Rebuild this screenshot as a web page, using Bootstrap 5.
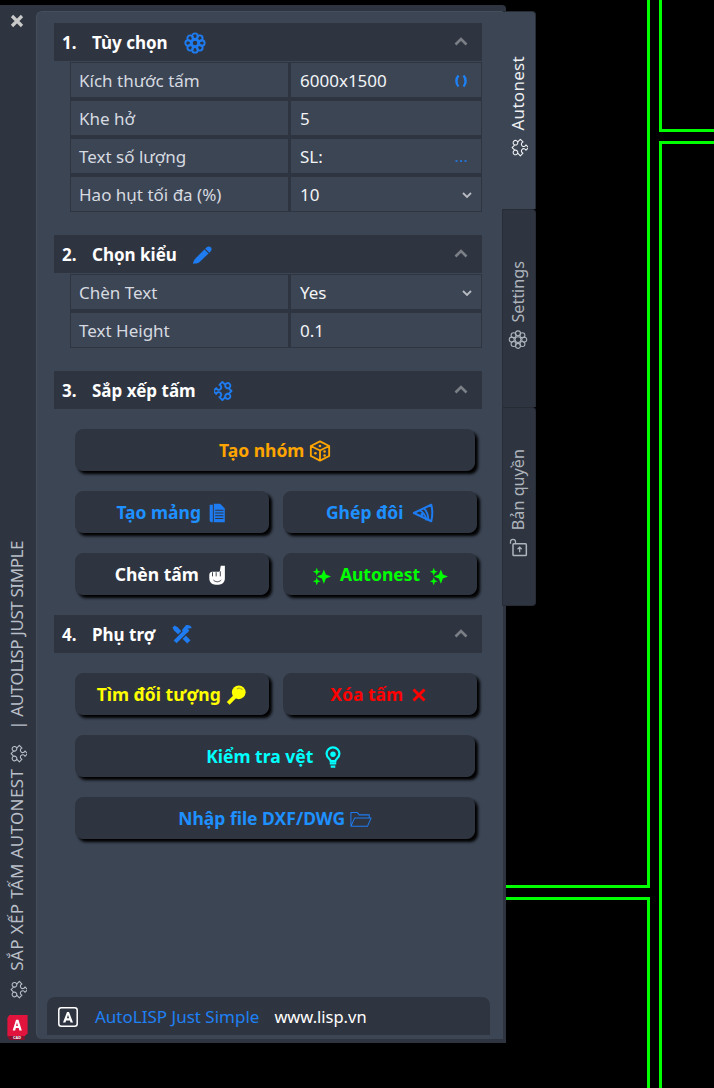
<!DOCTYPE html>
<html lang="vi">
<head>
  <meta charset="UTF-8">
  <title>Autonest</title>
  <link href="https://cdn.jsdelivr.net/npm/bootstrap@5.3.3/dist/css/bootstrap.min.css" rel="stylesheet">
  <style>
    body { background: #000; font-family: "Noto Sans", "Open Sans", sans-serif; }
    .cad-canvas { position: absolute; left: 0; top: 0; }
    .app-wrap { position: relative; padding-top: 5px; width: 536px; }
    .frame { width: 506px; height: 1038px; background: #2f3540; border-radius: 0 4px 0 0; }
    .side-bar { width: 36px; padding-top: 9px; }
    .close-x { width: 14px; height: 14px; margin-left: 10px; }
    .side-title { writing-mode: vertical-rl; transform: rotate(180deg); color: #b9bfc8; font-size: 17px; line-height: 20px; white-space: nowrap; margin-left: 7px; width: 20px; margin-bottom: 15px; }
    .side-title svg { width: 20px; height: 20px; }
    .title-one { letter-spacing: .35px; margin: 9px 0 5px; }
    .title-two { letter-spacing: -.4px; margin-top: 14px; }
    .cad-logo { width: 24px; height: 25px; margin-left: 5px; margin-bottom: 3px; }
    .panel-main { width: 467px; height: 1028px; margin-top: 6px; background: #3c4554; border-radius: 6px 0 0 6px; border-left: 1px solid #454e5d; border-top: 1px solid #454e5d; padding: 11px 0 4px 17px; }
    .sec-head { width: 428px; height: 38px; background: #2f3540; padding: 1px 14px 0 8px; color: #fff; font-weight: 700; font-size: 17px; }
    .sec-num { width: 30px; }
    .sec-icon { width: 22px; height: 22px; margin-left: 16px; }
    .icon-pull { margin-left: 15px; }
    .icon-push { margin-left: 18px; }
    .sec-caret { width: 14px; height: 9px; margin-left: auto; margin-top: -3px; }
    .prop-grid { display: grid; grid-template-columns: 217px 190px; gap: 4px 3px; width: 412px; margin-left: 16px; margin-top: 1px; padding: 1px 1px 1px 1px; background: #2f3540; }
    .prop-cell { height: 34px; background: #3c4554; padding: 2px 9px 0 8px; font-size: 17px; line-height: 32px; color: #d6dae0; }
    .prop-val { color: #f2f4f6; padding-left: 9px; }
    .sec-gap { margin-bottom: 23px; }
    .tool-btn { --bs-btn-bg: #2f3540; --bs-btn-border-color: #2f3540; --bs-btn-hover-bg: #2f3540; --bs-btn-hover-border-color: #2f3540; height: 42px; border-radius: 8px; padding: 1px 0 0; font-weight: 700; font-size: 17.5px; box-shadow: 3px 3px 3px #000; }
    .tool-btn svg { width: 22px; height: 22px; }
    .tool-btn svg.spark-size { width: 19px; height: 19px; }
    .btn-wide { width: 400px; }
    .btn-half { width: 194px; }
    .btn-area { padding-left: 21px; margin-top: 20px; margin-bottom: 20px; row-gap: 20px; }
    .btn-pair { gap: 14px; }
    .c-orange { --bs-btn-color: #ffa500; --bs-btn-hover-color: #ffa500; }
    .c-blue { --bs-btn-color: #1e90ff; --bs-btn-hover-color: #1e90ff; }
    .c-white { --bs-btn-color: #fff; --bs-btn-hover-color: #fff; }
    .c-lime { --bs-btn-color: #00ff00; --bs-btn-hover-color: #00ff00; }
    .c-yellow { --bs-btn-color: #ffff00; --bs-btn-hover-color: #ffff00; }
    .c-red { --bs-btn-color: #ff0000; --bs-btn-hover-color: #ff0000; }
    .c-cyan { --bs-btn-color: #00ffff; --bs-btn-hover-color: #00ffff; }
    .foot-bar { width: 443px; height: 38px; margin-left: -7px; margin-top: auto; background: #2f3540; border-radius: 8px 8px 0 0; padding: 2px 0 0 11px; font-size: 17px; color: #fff; }
    .foot-bar svg { width: 20px; height: 20px; margin-right: 17px; }
    .foot-name { color: #1e80f5; margin-right: 15px; }
    .foot-site { font-size: 16.5px; }
    .tab-col { width: 34px; margin-left: -4px; margin-top: 6px; height: 595px; position: relative; }
    .side-tab { height: 198px; background: #2f3540; border-right: 1px solid #262b34; border-left: 1px solid #282d37; border-top: 1px solid #262b34; border-radius: 0 4px 0 0; font-size: 16.2px; color: #aeb4bc; padding: 0 2px 6px 0; }
    .side-tab:last-child { border-radius: 0 4px 4px 0; height: 199px; border-bottom: 1px solid #262b34; }
    .side-tab.tab-on { background: #3c4554; color: #eef0f2; border-left-color: #3c4554; font-size: 17px; letter-spacing: .3px; padding-bottom: 8px; }
    .tab-label { writing-mode: vertical-rl; transform: rotate(180deg); line-height: 20px; gap: 7px; white-space: nowrap; }
    .tab-label svg { width: 20px; height: 20px; }
    .ic-bold { stroke-width: 2.1; }
    .ic-thin { stroke-width: 1.3; }
  </style>
</head>
<body>

  <!-- shared icon shapes -->
  <svg width="0" height="0" class="position-absolute">
    <symbol id="ic-puzzle" viewBox="0 0 24 24">
      <g fill="none" stroke="currentColor" stroke-linejoin="round" transform="translate(-2 0) rotate(45 14 12)">
        <path d="M5 7H9.500a2.800 2.800 0 1 1 5 0H19v4.500a2.800 2.800 0 1 1 0 5V21H14.500a2.800 2.800 0 1 0-5 0H5v-4.500a2.800 2.800 0 1 0 0-5z"/>
        <path d="M9.500 7a2.800 2.800 0 0 0 5 0M19 11.500a2.800 2.800 0 0 0 0 5"/>
      </g>
    </symbol>
    <symbol id="ic-flower" viewBox="0 0 24 24">
      <g fill="none" stroke="currentColor">
        <circle cx="12" cy="12" r="3.500"/>
        <circle cx="12" cy="4.500" r="3"/><circle cx="12" cy="19.500" r="3"/>
        <circle cx="4.500" cy="12" r="3"/><circle cx="19.500" cy="12" r="3"/>
        <circle cx="6.700" cy="6.700" r="3"/><circle cx="17.300" cy="6.700" r="3"/>
        <circle cx="6.700" cy="17.300" r="3"/><circle cx="17.300" cy="17.300" r="3"/>
      </g>
    </symbol>
    <symbol id="ic-spark" viewBox="0 0 24 24">
      <path d="M15 3l2.600 6.400L24 12l-6.400 2.600L15 21l-2.600-6.400L6 12l6.400-2.600zM6 1l1.400 3.600L11 6 7.400 7.400 6 11 4.600 7.400 1 6l3.600-1.400zM6 13l1.400 3.600L11 18l-3.600 1.400L6 23l-1.400-3.600L1 18l3.600-1.400z" fill="currentColor"/>
    </symbol>
    <symbol id="ic-up" viewBox="0 0 14 9">
      <path d="M1.500 7.500L7 2l5.500 5.500" fill="none" stroke="#7b7f86" stroke-width="2.600"/>
    </symbol>
  </svg>

  <!-- CAD drawing behind the palette -->
  <svg class="cad-canvas" width="714" height="1088">
    <g fill="#00ff00">
      <rect x="647" y="0" width="3" height="888"/>
      <rect x="659" y="0" width="3" height="132"/>
      <rect x="659" y="129" width="55" height="3"/>
      <rect x="659" y="141" width="55" height="3"/>
      <rect x="659" y="141" width="3" height="947"/>
      <rect x="500" y="885" width="150" height="3"/>
      <rect x="500" y="897" width="150" height="3"/>
      <rect x="647" y="897" width="3" height="191"/>
    </g>
  </svg>

  <div class="app-wrap d-flex align-items-start">
    <div class="frame d-flex position-relative">

      <!-- left title bar -->
      <div class="side-bar d-flex flex-column">
        <svg class="close-x" viewBox="0 0 14 14"><path d="M2 2l10 10M12 2L2 12" stroke="#c9c9c9" stroke-width="3.200"/></svg>
        <div class="side-title d-flex align-items-center mt-auto">
          <svg viewBox="0 0 24 24" class="ic-thin"><use href="#ic-puzzle"/></svg>
          <span class="title-one">SẮP XẾP TẤM AUTONEST</span>
          <svg viewBox="0 0 24 24" class="ic-thin"><use href="#ic-puzzle"/></svg>
          <span class="title-two">| AUTOLISP JUST SIMPLE</span>
        </div>
        <svg class="cad-logo" viewBox="0 0 24 26">
          <path d="M4 0h19v19l-3 3H2V3z" fill="#e0143c"/>
          <path d="M2 22h18v4H4z" fill="#8a0f2c"/>
          <path d="M7.500 16l3.500-11h2.500l3.500 11h-2.500l-.7-2.500h-3l-.7 2.500zM11 11.500h2l-1-3.700z" fill="#fff"/>
          <text x="12" y="25.300" font-size="4" font-weight="700" fill="#fff" text-anchor="middle" font-family="Noto Sans">CAD</text>
        </svg>
      </div>

      <!-- main panel -->
      <div class="panel-main d-flex flex-column">

        <div class="sec-head d-flex align-items-center">
          <span class="sec-num">1.</span><span>Tùy chọn</span>
          <svg class="sec-icon ic-bold" viewBox="0 0 24 24" style="color:#1e7bf0"><use href="#ic-flower"/></svg>
          <svg class="sec-caret"><use href="#ic-up"/></svg>
        </div>
        <div class="prop-grid sec-gap">
          <div class="prop-cell">Kích thước tấm</div>
          <div class="prop-cell prop-val d-flex justify-content-between align-items-center">6000x1500
            <svg class="me-1" width="14" height="14" viewBox="0 0 14 14"><path d="M4.500 1.500C1.700 4.500 1.700 9.500 4.500 12.500M9.500 1.500c2.800 3 2.800 8 0 11" fill="none" stroke="#1e80f5" stroke-width="2.400"/></svg>
          </div>
          <div class="prop-cell">Khe hở</div>
          <div class="prop-cell prop-val">5</div>
          <div class="prop-cell">Text số lượng</div>
          <div class="prop-cell prop-val d-flex justify-content-between align-items-center">SL:
            <svg class="me-1" width="14" height="14" viewBox="0 0 14 14"><path d="M1.500 11h2M6 11h2M10.500 11h2" stroke="#1e80f5" stroke-width="1.600"/></svg>
          </div>
          <div class="prop-cell">Hao hụt tối đa (%)</div>
          <div class="prop-cell prop-val d-flex justify-content-between align-items-center">10
            <svg width="10" height="8" viewBox="0 0 10 8"><path d="M1 2l4 4 4-4" fill="none" stroke="#b8bcc2" stroke-width="1.800"/></svg>
          </div>
        </div>

        <div class="sec-head d-flex align-items-center">
          <span class="sec-num">2.</span><span>Chọn kiểu</span>
          <svg class="sec-icon icon-pull" viewBox="0 0 24 24"><path d="M1 21.500c.5-2.500 1.500-4.500 3-6L15.500 4c1.500-1.500 3.500-2 5-.5s1 3.500-.5 5L8 20c-1.700 1.300-4 1.500-7 1.500z" fill="#1e7bf0"/><path d="M14 5.500l4.500 4.500" stroke="#2f3540" stroke-width="1.200"/></svg>
          <svg class="sec-caret"><use href="#ic-up"/></svg>
        </div>
        <div class="prop-grid sec-gap">
          <div class="prop-cell">Chèn Text</div>
          <div class="prop-cell prop-val d-flex justify-content-between align-items-center">Yes
            <svg width="10" height="8" viewBox="0 0 10 8"><path d="M1 2l4 4 4-4" fill="none" stroke="#b8bcc2" stroke-width="1.800"/></svg>
          </div>
          <div class="prop-cell">Text Height</div>
          <div class="prop-cell prop-val">0.1</div>
        </div>

        <div class="sec-head d-flex align-items-center">
          <span class="sec-num">3.</span><span>Sắp xếp tấm</span>
          <svg class="sec-icon icon-push ic-bold" viewBox="0 0 24 24" style="color:#1e7bf0"><use href="#ic-puzzle"/></svg>
          <svg class="sec-caret"><use href="#ic-up"/></svg>
        </div>
        <div class="btn-area d-flex flex-column">
          <button type="button" class="btn tool-btn btn-wide c-orange">Tạo nhóm
            <svg class="align-text-bottom" viewBox="0 0 24 24"><path d="M12 1.500l10 5v11l-10 5-10-5v-11zM2 6.500l10 5 10-5M12 11.500v11" fill="none" stroke="#ffa500" stroke-width="2" stroke-linejoin="round"/><circle cx="12" cy="6.500" r="1.400" fill="#ffa500"/><circle cx="7" cy="14.500" r="1.400" fill="#ffa500"/><circle cx="17" cy="12.500" r="1.400" fill="#ffa500"/><circle cx="17" cy="17" r="1.400" fill="#ffa500"/></svg>
          </button>
          <div class="d-flex btn-pair">
            <button type="button" class="btn tool-btn btn-half c-blue">Tạo mảng
              <svg class="align-text-bottom" viewBox="0 0 24 24"><path d="M4 3h3.500v19H6c-1.500 0-2-1-2-2z" fill="#1e7bf0"/><path d="M8.500 2h7l5 5v15h-12z" fill="#1e7bf0"/><path d="M10 9h9M10 12h9M10 15h9M10 18h9" stroke="#2f3540" stroke-width="1.200"/></svg>
            </button>
            <button type="button" class="btn tool-btn btn-half c-blue">Ghép đôi
              <svg class="align-text-bottom ms-1" viewBox="0 0 24 24"><path d="M2 12L21 3c1.500 6 1.500 12 0 18z" fill="none" stroke="#1e7bf0" stroke-width="2.200" stroke-linejoin="round"/><path d="M8 9c4 1.500 7 5 7.500 11M13 7c2.500 2 4.500 6 5 13" fill="none" stroke="#1e7bf0" stroke-width="2"/><circle cx="11" cy="13.500" r="1.700" fill="#1e7bf0"/></svg>
            </button>
          </div>
          <div class="d-flex btn-pair">
            <button type="button" class="btn tool-btn btn-half c-white">Chèn tấm
              <svg class="align-text-bottom ms-1" viewBox="0 0 24 24"><path d="M15 2h4.500v13.500c0 4.500-3 7-7 7h-3c-4 0-7-2.500-7-7V12c0-2 1.300-3.500 3.200-3.500h7.300L14 8z" fill="#fff"/><path d="M6 9v4.500M10 9v4.500M14.500 8v5.500M7 17.500c2.500 2.500 6 2.500 8.500 0" fill="none" stroke="#2f3540" stroke-width="1"/></svg>
            </button>
            <button type="button" class="btn tool-btn btn-half c-lime">
              <svg class="align-text-bottom me-1 spark-size" viewBox="0 0 24 24" style="color:#0f0"><use href="#ic-spark"/></svg>
              Autonest
              <svg class="align-text-bottom ms-1 spark-size" viewBox="0 0 24 24" style="color:#0f0"><use href="#ic-spark"/></svg>
            </button>
          </div>
        </div>

        <div class="sec-head d-flex align-items-center">
          <span class="sec-num">4.</span><span>Phụ trợ</span>
          <svg class="sec-icon" viewBox="0 0 24 24"><path d="M5 5l14.500 14.500" stroke="#1e7bf0" stroke-width="5"/><path d="M1.500 4L4 1.500 8 4 4 8z" fill="#1e7bf0"/><path d="M18.500 5.500L4.500 19.500" stroke="#2f3540" stroke-width="7"/><path d="M18.500 5.500L4.500 19.500" stroke="#1e7bf0" stroke-width="4.500"/><path d="M16 1.500c3-1 6 .5 6.500 3l-4 .5-.5 .5 .5 3.500c-2.500 1.500-6 0-6.500-2.500z" fill="#1e7bf0"/></svg>
          <svg class="sec-caret"><use href="#ic-up"/></svg>
        </div>
        <div class="btn-area d-flex flex-column">
          <div class="d-flex btn-pair">
            <button type="button" class="btn tool-btn btn-half c-yellow">Tìm đối tượng
              <svg class="align-text-bottom" viewBox="0 0 24 24"><circle cx="15" cy="9" r="7.500" fill="#ff0"/><path d="M9.500 12L2 19.500 5 22.500l7.500-7.500z" fill="#ff0"/><path d="M13 5.500a4 4 0 0 1 6 1" fill="none" stroke="#b5b520" stroke-width="1.300"/></svg>
            </button>
            <button type="button" class="btn tool-btn btn-half c-red">Xóa tấm
              <svg class="align-text-bottom" viewBox="0 0 24 24"><path d="M6 6l12 12M18 6L6 18" stroke="#f00" stroke-width="3.200"/></svg>
            </button>
          </div>
          <button type="button" class="btn tool-btn btn-wide c-cyan">Kiểm tra vệt
            <svg class="align-text-bottom ms-1" viewBox="0 0 24 24"><path d="M9.500 16.500c0-2.500-4.500-3-4.500-8a7 7 0 1 1 14 0c0 5-4.500 5.500-4.500 8z" fill="none" stroke="#0ff" stroke-width="2.400"/><circle cx="12" cy="9" r="3" fill="#0ff"/><path d="M8.500 19h7M9.500 22.500h5" stroke="#0ff" stroke-width="2.600"/></svg>
          </button>
          <button type="button" class="btn tool-btn btn-wide c-blue">Nhập file DXF/DWG
            <svg class="align-text-bottom" viewBox="0 0 24 24"><path d="M1 20V5h7l2 2.500h11V11M1 20l4-9h18l-4 9z" fill="none" stroke="#1e7bf0" stroke-width="1.100" stroke-linejoin="round"/></svg>
          </button>
        </div>

        <div class="foot-bar d-flex align-items-center">
          <svg viewBox="0 0 20 20"><rect x=".8" y=".8" width="18.400" height="18.400" rx="2.500" fill="none" stroke="#fff" stroke-width="1.500"/><path d="M5 15.500L9 5h2l4 10.500h-2.500l-.6-2H8.100l-.6 2zM8.900 11.300h2.200L10 7.800z" fill="#fff"/></svg>
          <span class="foot-name">AutoLISP Just Simple</span>
          <span class="foot-site">www.lisp.vn</span>
        </div>
      </div>
    </div>

    <!-- palette tabs on the right edge -->
    <div class="tab-col d-flex flex-column">
      <div class="side-tab tab-on d-flex align-items-center justify-content-center">
        <div class="tab-label d-flex align-items-center">
          <svg viewBox="0 0 24 24" class="ic-thin"><use href="#ic-puzzle"/></svg><span>Autonest</span>
        </div>
      </div>
      <div class="side-tab d-flex align-items-center justify-content-center">
        <div class="tab-label d-flex align-items-center">
          <svg viewBox="0 0 24 24" class="ic-thin"><use href="#ic-flower"/></svg><span>Settings</span>
        </div>
      </div>
      <div class="side-tab d-flex align-items-center justify-content-center">
        <div class="tab-label d-flex align-items-center">
          <svg viewBox="0 0 24 24"><g transform="rotate(180 12 12)"><rect x="6" y="8" width="16" height="14" rx="1" fill="none" stroke="currentColor" stroke-width="1.800"/><path d="M9 8V5.500a3 3 0 0 0-6 0V8M14 18v-6M11.500 14.500l2.500-2.500 2.500 2.500" fill="none" stroke="currentColor" stroke-width="1.500"/></g></svg><span>Bản quyền</span>
        </div>
      </div>
    </div>
  </div>

  <script src="https://cdn.jsdelivr.net/npm/bootstrap@5.3.3/dist/js/bootstrap.bundle.min.js"></script>
</body>
</html>
